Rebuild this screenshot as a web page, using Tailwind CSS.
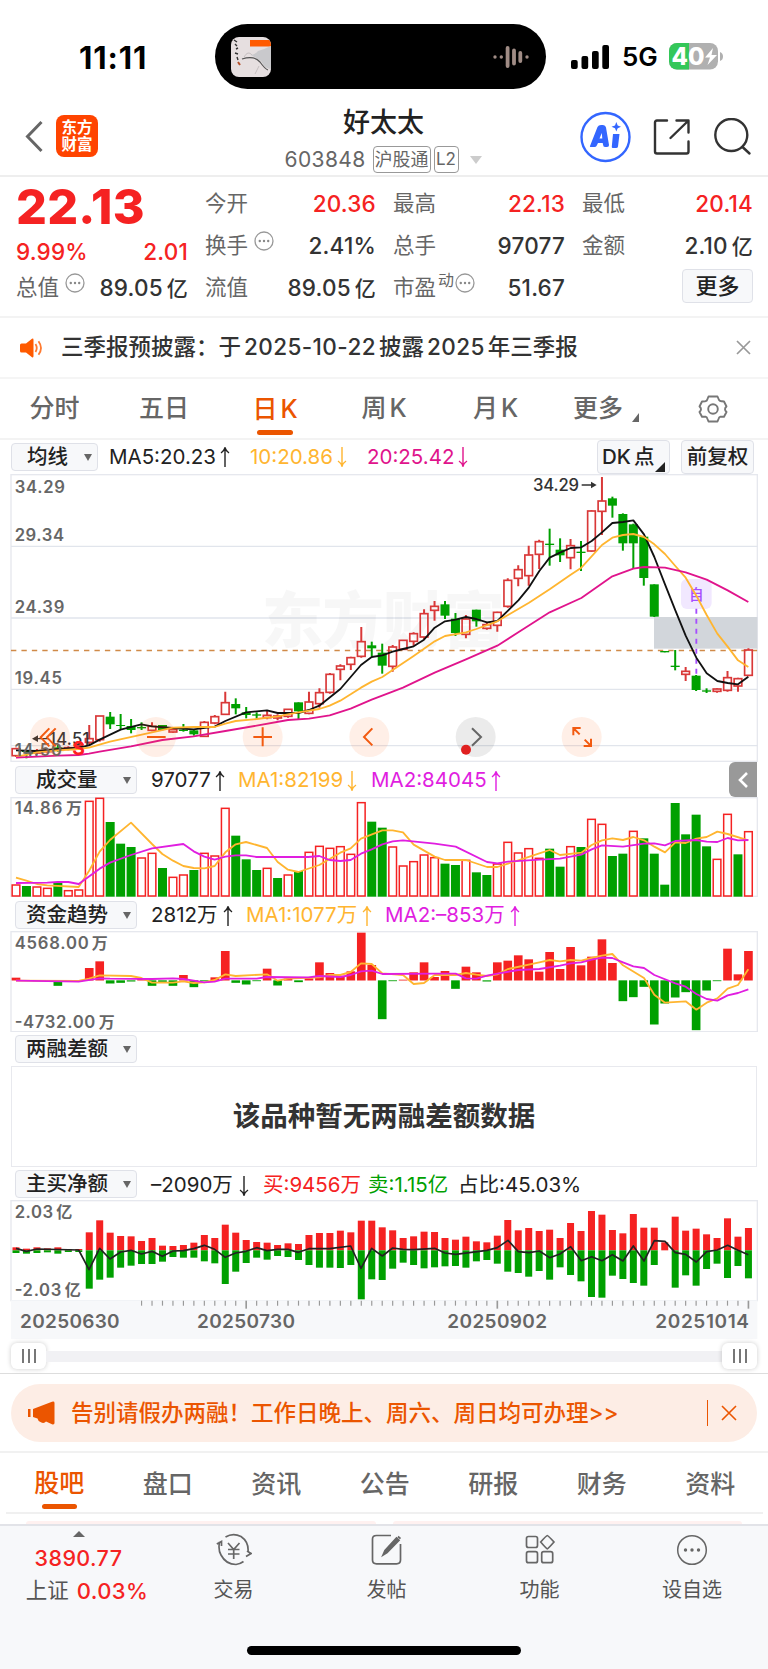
<!DOCTYPE html>
<html lang="zh-CN">
<head>
<meta charset="utf-8">
<title>好太太 603848</title>
<script src="https://cdn.jsdelivr.net/npm/@tailwindcss/browser@4"></script>
</head>
<body class="bg-white">
<div class="w-[768px] h-[1669px] overflow-hidden flex flex-col bg-white text-[#333] whitespace-nowrap font-['Inter','Noto_Sans_CJK_SC',sans-serif]">

  <!-- status bar -->
  <div class="h-[98px] shrink-0 flex items-start pt-6">
    <div class="w-[215px] h-[66px] flex items-center pl-[79px]"><span class="text-[31px] font-bold leading-none text-black tracking-[0.9px]">11:11</span></div>
    <div class="w-[331px] h-[65px] rounded-full bg-black flex items-center justify-between pl-4 pr-[17px]">
      <svg class="w-10 h-10" viewBox="0 0 40 40"><defs><clipPath id="th"><rect width="40" height="40" rx="8"/></clipPath></defs><g clip-path="url(#th)"><rect width="40" height="40" fill="#e6dfe0"/><rect x="19" y="3" width="21" height="6.5" fill="#ff5a00"/><path d="M20 18Q25 17 27 14Q34 12 40 9V32Q34 32 30 24Z" fill="#c9c9cc"/><path d="M11 22Q23 18 29 25Q34 32 37 33" fill="none" stroke="#555" stroke-width="1.2"/><path d="M13 20Q17 13 21 18M24 37L28 29" fill="none" stroke="#c5bfc0"/><path d="M3 3l3 2M4 7l2 2M5 12l2-1M4 16l3 1M6 20l1 3" stroke="#333" stroke-width="1.4"/><path d="M7 25l2 3" stroke="#b5502a" stroke-width="2"/></g></svg>
      <svg class="w-9 h-6" viewBox="0 0 36 24" stroke="#a08c85" stroke-linecap="round" stroke-width="3.4" fill="none"><path d="M2 12v.1M8.3 12v.1"/><path d="M14.6 3v18M21 5.500v13M27.300 8v8" stroke-width="3.800"/><path d="M34 12v.1"/></svg>
    </div>
    <div class="h-[65px] flex items-center pl-[25px]">
      <svg class="w-[38px] h-6" viewBox="0 0 38 24" fill="#000"><rect y="15" width="6.700" height="9" rx="2"/><rect x="10.500" y="11" width="6.700" height="13" rx="2"/><rect x="21" y="6" width="6.700" height="18" rx="2"/><rect x="31.300" width="6.700" height="24" rx="2"/></svg>
      <span class="ml-[13px] w-[34px] text-[26px] font-semibold leading-none text-black">5G</span>
      <svg class="ml-[13px] w-[55px] h-[27px]" viewBox="0 0 55 27"><defs><clipPath id="bt"><rect width="49" height="26.500" rx="8"/></clipPath></defs><g clip-path="url(#bt)"><rect width="49" height="27" fill="#b0b0b0"/><rect width="20" height="27" fill="#34c759"/></g><path d="M51 9q3 1 3 4.500t-3 4.500z" fill="#b0b0b0"/><text x="2.500" y="22" font-size="24" font-weight="800" fill="#fff" textLength="33" lengthAdjust="spacingAndGlyphs">40</text><path d="M44 5L36 14.500H41L38.500 22L48 12H42.500Z" fill="#fff"/></svg>
    </div>
  </div>

  <!-- title bar -->
  <div class="h-[79px] shrink-0 border-b-2 border-[#eee] flex">
    <div class="w-[250px] flex items-start pt-[17px] pl-[25px]">
      <svg class="w-[18px] h-[42px]" viewBox="0 0 18 42" fill="none" stroke="#666" stroke-width="3"><path d="M16.500 7L2.500 21.500L16.500 36"/></svg>
      <div class="ml-[13px] w-[42px] h-[42px] rounded-lg bg-[#ff4400] text-white font-bold text-[15.5px] leading-[17px] text-center pt-1 whitespace-normal">东方<br>财富</div>
    </div>
    <div class="w-[267px] flex flex-col items-center">
      <div class="h-[49px] flex items-center text-[27px] font-medium text-[#222] leading-none">好太太</div>
      <div class="flex items-center h-[27px] text-[#666] leading-none -ml-px -mt-px">
        <span class="text-[21px] w-[88px] tracking-[0.4px]">603848</span>
        <span class="w-[58px] h-[27px] rounded border border-[#999] text-[18px] flex items-center justify-center">沪股通</span>
        <span class="ml-[3px] w-[25px] h-[27px] rounded border border-[#999] text-[17px] flex items-center justify-center">L2</span>
        <svg class="ml-[11px] w-3 h-2" viewBox="0 0 12 8"><path d="M0 0H12L6 8Z" fill="#ccc"/></svg>
      </div>
    </div>
    <div class="flex items-start pt-3 pl-[63px]">
      <svg class="w-[51px] h-[54px]" viewBox="0 0 51 54" fill="#3366ff"><circle cx="25.500" cy="27" r="24" fill="none" stroke="#3366ff" stroke-width="2.400"/><path fill-rule="evenodd" d="M10 36L17.500 17Q18.500 15 21 15H23Q25.500 15 26 17.500L29 35Q29.200 37 27 37H25Q23.200 37 23 34.500L22.700 33H18L16.500 36Q16 37 14.500 37H11Q9.500 37.200 10 36ZM19.500 28.500H22.300L21.800 23Z"/><path d="M33 24H39.500L38 36.500Q37.800 38 36 38H33Q31.500 38 31.800 36.500Z"/><path d="M36.300 12.500L37.700 16L41 17.300L37.700 18.700L36.300 22L35 18.700L31.500 17.300L35 16Z" transform="translate(0 -.5)"/></svg>
      <svg class="ml-[22px] mt-[8px] w-[38px] h-[38px]" viewBox="0 0 38 38" fill="none" stroke="#333" stroke-width="2.400" stroke-linecap="round" stroke-linejoin="round"><path d="M14 2.500H4Q2 2.500 2 4.500V33.500Q2 35.500 4 35.500H33.500Q35.500 35.500 35.500 33.500V23.500M23.500 2.500H35.500V14.500M35 3L17.500 20"/></svg>
      <svg class="ml-[22px] mt-[8px] w-[40px] h-[40px]" viewBox="0 0 40 40" fill="none" stroke="#333" stroke-width="2.400" stroke-linecap="round"><circle cx="18.300" cy="17" r="16"/><path d="M29.500 29L36.500 35.500"/></svg>
    </div>
  </div>

  <!-- quote -->
  <div class="h-[141px] shrink-0 border-b-2 border-[#f3f3f3] flex text-[21.5px] leading-none text-[#666]">
    <div class="w-[188px] pl-[16px] flex flex-col pt-[2px]">
      <div class="h-[57px] flex items-center text-[48.5px] font-extrabold text-[#f52222] tracking-[0.2px]"><span>22.13</span></div>
      <div class="h-[32px] flex items-center justify-between text-[22.5px] font-medium text-[#f52222] tracking-[0.2px]"><span>9.99%</span><span>2.01</span></div>
      <div class="h-[40px] flex items-center justify-between"><span class="flex items-start">总值<svg class="ml-[6px] -mt-1 w-5 h-5" viewBox="0 0 20 20"><use href="#dots"/></svg></span><span class="text-[22.5px] font-medium text-[#333] tracking-[0.2px]">89.05<span class="ml-1 text-[21px]">亿</span></span></div>
    </div>
    <div class="ml-[17px] w-[171px] flex flex-col pt-[6px]">
      <div class="h-[42px] flex items-center justify-between"><span>今开</span><span class="text-[22.5px] font-medium text-[#f52222] tracking-[0.2px]">20.36</span></div>
      <div class="h-[42px] flex items-center justify-between"><span class="flex items-start">换手<svg class="ml-[6px] -mt-1 w-5 h-5" viewBox="0 0 20 20"><use href="#dots"/></svg></span><span class="text-[22.5px] font-medium text-[#333] tracking-[0.2px]">2.41%</span></div>
      <div class="h-[42px] flex items-center justify-between"><span>流值</span><span class="text-[22.5px] font-medium text-[#333] tracking-[0.2px]">89.05<span class="ml-1 text-[21px]">亿</span></span></div>
    </div>
    <div class="ml-[17px] w-[172px] flex flex-col pt-[6px]">
      <div class="h-[42px] flex items-center justify-between"><span>最高</span><span class="text-[22.5px] font-medium text-[#f52222] tracking-[0.2px]">22.13</span></div>
      <div class="h-[42px] flex items-center justify-between"><span>总手</span><span class="text-[22.5px] font-medium text-[#333] tracking-[0.2px]">97077</span></div>
      <div class="h-[42px] flex items-center justify-between"><span class="flex items-start">市盈<span class="ml-[2px] text-[16px] -mt-[5px]">动</span><svg class="ml-px -mt-1 w-5 h-5" viewBox="0 0 20 20"><use href="#dots"/></svg></span><span class="text-[22.5px] font-medium text-[#333] tracking-[0.2px]">51.67</span></div>
    </div>
    <div class="ml-[17px] w-[171px] flex flex-col pt-[6px]">
      <div class="h-[42px] flex items-center justify-between"><span>最低</span><span class="text-[22.5px] font-medium text-[#f52222] tracking-[0.2px]">20.14</span></div>
      <div class="h-[42px] flex items-center justify-between"><span>金额</span><span class="text-[22.5px] font-medium text-[#333] tracking-[0.2px]">2.10<span class="ml-1 text-[21px]">亿</span></span></div>
      <div class="mt-[2px] self-end w-[71px] h-[34px] rounded border border-[#dfe1e8] bg-[#f7f8fa] flex items-center justify-center text-[22px] font-medium text-[#222]">更多</div>
    </div>
  </div>
  <svg class="hidden"><g id="dots"><circle cx="10" cy="10" r="9" fill="none" stroke="#999" stroke-width="1.300"/><g fill="#888"><circle cx="5.800" cy="10" r="1.200"/><circle cx="10" cy="10" r="1.200"/><circle cx="14.200" cy="10" r="1.200"/></g></g></svg>

  <!-- announcement -->
  <div class="h-[61px] shrink-0 border-b-2 border-[#f5f5f5] flex items-center pl-5 pr-[17px]">
    <svg class="w-[23px] h-5" viewBox="0 0 23 20" fill="#ff5a00"><path d="M1.500 5.500H6L12 .8Q13.500 0 13.500 2V18Q13.500 20 12 19.200L6 14.500H1.500Q0 14.500 0 13V7Q0 5.500 1.500 5.500Z"/><path d="M15.500 6q2.500 4 0 8M18.500 3.200q5 6.800 0 13.600" fill="none" stroke="#ff7a30" stroke-width="1.800"/></svg>
    <span class="ml-[18px] text-[22.5px] font-medium leading-none text-[#333]">三季报预披露：于<span class="mx-[3px] tracking-[0.4px]">2025-10-22</span>披露<span class="mx-[3px] tracking-[0.4px]">2025</span>年三季报</span>
    <svg class="ml-auto w-[15px] h-[15px]" viewBox="0 0 15 15" stroke="#999" stroke-width="1.700"><path d="M1 1L14 14M14 1L1 14"/></svg>
  </div>

  <!-- period tabs -->
  <div class="h-[61px] shrink-0 border-b-2 border-[#f3f3f3] flex text-[25px] leading-none text-[#666] font-medium">
    <div class="w-[109px] flex items-center justify-center">分时</div>
    <div class="w-[110px] flex items-center justify-center">五日</div>
    <div class="w-[112px] flex flex-col items-center text-[#eb5500]"><div class="h-[51px] pt-[10px] flex items-center gap-[3px]"><span>日</span><span>K</span></div><div class="w-[36px] h-[5px] rounded-full bg-[#eb5500]"></div></div>
    <div class="w-[106px] flex items-center justify-center gap-[3px]"><span>周</span><span>K</span></div>
    <div class="w-[117px] flex items-center justify-center gap-[3px]"><span>月</span><span>K</span></div>
    <div class="ml-[19px] w-[67px] flex items-center">更多<svg class="ml-[9px] mt-[17px] w-[7px] h-[9px]" viewBox="0 0 7 9"><path d="M7 0V9H0Z" fill="#666"/></svg></div>
    <div class="ml-[58px] flex items-center"><svg class="w-[30px] h-[30px]" viewBox="0 0 30 30" fill="none" stroke="#777" stroke-width="1.900" stroke-linejoin="round"><path d="M10.500 2.500H19.500L21 6Q22 7.500 24 7.200L26 7.500L28.500 12.500Q25.500 15 28.500 18L26 22.800L22.500 22.600Q21 23 20.500 25L19.500 27.500H10.500L9.500 25Q9 23 7.500 22.600L4 22.800L1.500 18Q4.500 15 1.500 12.500L4 7.500L7 7.400Q9 7 9.300 5.500Z"/><circle cx="15" cy="15" r="4.800"/></svg></div>
  </div>

  <!-- moving averages row -->
  <div class="h-[34px] shrink-0 flex items-start pl-[11px] text-[20.5px] leading-none">
    <div class="mt-[3px] w-[87px] h-[28px] rounded border border-[#dfe1e8] bg-[#f7f8fa] flex items-center justify-between pl-[15px] pr-[5px] text-[20.5px] font-medium text-[#222]">均线<svg class="w-2 h-[7px]" viewBox="0 0 8 7"><path d="M0 0H8L4 7Z" fill="#666"/></svg></div>
    <div class="ml-[11px] h-[34px] w-[141px] flex items-center text-[#222]">MA5:20.23<svg class="ml-1 w-[10px] h-5"><use href="#up"/></svg></div>
    <div class="h-[34px] w-[117px] flex items-center text-[#ffb530]">10:20.86<svg class="ml-1 w-[10px] h-5"><use href="#down"/></svg></div>
    <div class="h-[34px] w-[230px] flex items-center text-[#e0148c]">20:25.42<svg class="ml-1 w-[10px] h-5"><use href="#down"/></svg></div>
    <div class="w-[73px] h-[34px] rounded border border-[#dfe1e8] bg-[#f7f8fa] flex items-center pl-1 text-[20.5px] font-medium text-[#222]">DK<span class="ml-[3px]">点</span><svg class="ml-px mt-5 w-[10px] h-[10px]" viewBox="0 0 10 10"><path d="M10 0V10H0Z" fill="#222"/></svg></div>
    <div class="ml-[11px] w-[73px] h-[34px] rounded border border-[#dfe1e8] bg-[#f7f8fa] flex items-center justify-center text-[20.5px] font-medium text-[#222]">前复权</div>
  </div>
  <svg class="hidden"><g id="up" fill="none" stroke="currentColor" stroke-width="1.400"><path d="M5 20V1M1 6Q4 4 5 .8Q6 4 9 6"/></g><g id="down" fill="none" stroke="currentColor" stroke-width="1.400"><path d="M5 0V19M1 14Q4 16 5 19.200Q6 16 9 14"/></g></svg>

  <!-- chart panels; svg units are thirds of a pixel -->
  <svg id="kline" class="w-[768px] h-[288px] shrink-0" viewBox="0 117 2304 864"></svg>

  <div class="h-[35px] shrink-0 flex items-start pl-[15px] text-[20.5px] leading-none">
    <div class="mt-1 w-[122px] h-[28px] rounded border border-[#dfe1e8] bg-[#f7f8fa] flex items-center pl-5 text-[20.5px] font-medium text-[#222]"><span class="w-[87px]">成交量</span><svg class="w-2 h-[7px]" viewBox="0 0 8 7"><path d="M0 0H8L4 7Z" fill="#666"/></svg></div>
    <div class="ml-[14px] h-[37px] w-[87px] flex items-center text-[#222]">97077<svg class="ml-1 w-[10px] h-5"><use href="#up"/></svg></div>
    <div class="h-[37px] w-[133px] flex items-center text-[#ffb530]">MA1:82199<svg class="ml-1 w-[10px] h-5"><use href="#down"/></svg></div>
    <div class="h-[37px] w-[358px] flex items-center text-[#e01ee0]">MA2:84045<svg class="ml-1 w-[10px] h-5"><use href="#up"/></svg></div>
    <div class="w-7 h-[35px] rounded-l-md bg-[#999] flex items-center justify-center"><svg class="w-[10px] h-4" viewBox="0 0 10 16" fill="none" stroke="#fff" stroke-width="2.600"><path d="M9 1L2 8L9 15"/></svg></div>
  </div>
  <svg id="volume" class="w-[768px] h-[100px] shrink-0" viewBox="0 111 2304 300"></svg>

  <div class="h-[34px] shrink-0 flex items-start pl-[15px] text-[20.5px] leading-none">
    <div class="mt-1 w-[122px] h-[28px] rounded border border-[#dfe1e8] bg-[#f7f8fa] flex items-center pl-[10px] text-[20.5px] font-medium text-[#222]"><span class="w-[97px]">资金趋势</span><svg class="w-2 h-[7px]" viewBox="0 0 8 7"><path d="M0 0H8L4 7Z" fill="#666"/></svg></div>
    <div class="ml-[14px] h-[37px] w-[95px] flex items-center text-[#222]">2812万<svg class="ml-[5px] w-[10px] h-5"><use href="#up"/></svg></div>
    <div class="h-[37px] w-[139px] flex items-center text-[#ffb530]">MA1:1077万<svg class="ml-[5px] w-[10px] h-5"><use href="#up"/></svg></div>
    <div class="h-[37px] flex items-center text-[#e01ee0]">MA2:–853万<svg class="ml-[5px] w-[10px] h-5"><use href="#up"/></svg></div>
  </div>
  <svg id="funds" class="w-[768px] h-[101px] shrink-0" viewBox="0 513 2304 303"></svg>

  <div class="h-[34px] shrink-0 flex items-start pl-[15px] leading-none">
    <div class="mt-[3px] w-[122px] h-[28px] rounded border border-[#dfe1e8] bg-[#f7f8fa] flex items-center pl-[10px] text-[20.5px] font-medium text-[#222]"><span class="w-[97px]">两融差额</span><svg class="w-2 h-[7px]" viewBox="0 0 8 7"><path d="M0 0H8L4 7Z" fill="#666"/></svg></div>
  </div>
  <div class="mx-[11px] h-[101px] shrink-0 border border-[#e8e9ee] flex items-center justify-center text-[27.5px] font-bold leading-none text-[#333]">该品种暂无两融差额数据</div>

  <div class="h-[33px] shrink-0 flex items-start pl-[15px] text-[20.5px] leading-none">
    <div class="mt-[3px] w-[122px] h-[28px] rounded border border-[#dfe1e8] bg-[#f7f8fa] flex items-center pl-[10px] text-[20.5px] font-medium text-[#222]"><span class="w-[97px]">主买净额</span><svg class="w-2 h-[7px]" viewBox="0 0 8 7"><path d="M0 0H8L4 7Z" fill="#666"/></svg></div>
    <div class="ml-[14px] h-[37px] w-[112px] flex items-center text-[#222]">–2090万<svg class="ml-[6px] w-[10px] h-5"><use href="#down"/></svg></div>
    <div class="h-[37px] w-[105px] flex items-center text-[#f52222]">买:9456万</div>
    <div class="h-[37px] w-[90px] flex items-center text-[#00a000]">卖:1.15亿</div>
    <div class="h-[37px] flex items-center text-[#222]">占比:45.03%</div>
  </div>
  <svg id="netbuy" class="w-[768px] h-[139px] shrink-0" viewBox="0 120 2304 417"></svg>

  <!-- range slider -->
  <div class="h-[35px] shrink-0 border-b border-[#ddd] px-[11px] flex items-center">
    <div class="w-[35px] h-[26px] rounded-md bg-white shadow-[0_0_5px_rgba(0,0,0,0.2)] flex items-center justify-center gap-1"><i class="w-[2px] h-[14px] bg-[#777]"></i><i class="w-[2px] h-[14px] bg-[#777]"></i><i class="w-[2px] h-[14px] bg-[#777]"></i></div>
    <div class="flex-1 h-[11px] bg-[#f1f1f4]"></div>
    <div class="w-[35px] h-[26px] rounded-md bg-white shadow-[0_0_5px_rgba(0,0,0,0.2)] flex items-center justify-center gap-1"><i class="w-[2px] h-[14px] bg-[#777]"></i><i class="w-[2px] h-[14px] bg-[#777]"></i><i class="w-[2px] h-[14px] bg-[#777]"></i></div>
  </div>

  <!-- promo banner -->
  <div class="h-[79px] shrink-0 border-b-2 border-[#f1f1f1] pt-[10px] px-[11px]">
    <div class="h-[58px] rounded-full bg-[#fdede5] flex items-center pl-[17px] pr-[20px] text-[#eb5500]">
      <svg class="w-[27px] h-6" viewBox="0 0 27 24" fill="#eb5500"><path d="M0 8H2.500V16H0ZM5 8L24 .7Q26.500 0 26.500 2V22Q26.500 24 24 23.300L18 20.500Q16 23 12.500 21Q10 20 9.500 17.500L5 16Z"/></svg>
      <span class="ml-[16px] text-[22.5px] font-medium leading-none">告别请假办两融！工作日晚上、周六、周日均可办理&gt;&gt;</span>
      <div class="ml-auto w-px h-[26px] bg-[#eb5500]"></div>
      <svg class="ml-[13px] w-4 h-4" viewBox="0 0 16 16" stroke="#eb5500" stroke-width="1.600"><path d="M1 1L15 15M15 1L1 15"/></svg>
    </div>
  </div>

  <!-- section tabs -->
  <div class="h-[71px] shrink-0 flex flex-col items-center">
    <div class="h-[59px] w-[768px] pl-[5px] flex text-[25px] leading-none text-[#666] font-medium">
      <div class="w-[108.5px] flex flex-col items-center text-[#eb5500]"><div class="h-[51px] flex items-center pt-[10px]">股吧</div><div class="w-[35px] h-[5px] rounded-full bg-[#eb5500]"></div></div>
      <div class="w-[108.5px] h-[62px] flex items-center justify-center">盘口</div>
      <div class="w-[108.5px] h-[62px] flex items-center justify-center">资讯</div>
      <div class="w-[108.5px] h-[62px] flex items-center justify-center">公告</div>
      <div class="w-[108.5px] h-[62px] flex items-center justify-center">研报</div>
      <div class="w-[108.5px] h-[62px] flex items-center justify-center">财务</div>
      <div class="w-[108.5px] h-[62px] flex items-center justify-center">资料</div>
    </div>
    <div class="w-[757px] h-[2px] bg-[#f0f0f0]"></div>
    <div class="mt-[7px] w-[716px] h-[3px] flex gap-[17px]"><div class="flex-1 bg-[#fff1f0] rounded-t-lg"></div><div class="flex-1 bg-[#fff1f0] rounded-t-lg"></div></div>
  </div>

  <!-- bottom bar -->
  <div class="flex-1 border-t-2 border-[#e2e3e8] bg-[#f7f8fa] flex flex-col">
    <div class="h-[120px] flex text-[20px] leading-none text-[#555] font-medium">
      <div class="w-[157px] flex flex-col items-center pt-[5px]">
        <svg class="w-3 h-[6px]" viewBox="0 0 12 6"><path d="M6 0L12 6H0Z" fill="#666"/></svg>
        <span class="mt-[11px] text-[21.5px] text-[#f52222] tracking-[0.4px]">3890.77</span>
        <div class="mt-[10px] ml-[17px] flex items-center text-[21.5px] font-normal">上证<span class="ml-[8px] text-[22px] font-medium text-[#f52222] tracking-[0.4px]">0.03%</span></div>
      </div>
      <div class="w-[153px] flex flex-col items-center pt-[7px]">
        <svg class="w-[36px] h-[34px]" viewBox="0 0 36 34" fill="none" stroke="#666" stroke-width="1.700"><path d="M9.500 4Q17 -.5 25 3.500Q33 9 32 19M3.500 9Q2 17 5 22Q10 31.500 20 31.500Q24 31 27.500 28.500M.8 11L5.500 8.500V13M30 23.500L35 20.500L31 18M12 10L17.700 16.500L23.500 10M17.700 16.500V26M12 16.500H23.500M12 21H23.500"/></svg>
        <span class="mt-[13px] font-normal">交易</span>
      </div>
      <div class="w-[153px] flex flex-col items-center pt-[7px]">
        <svg class="w-[36px] h-[34px]" viewBox="0 0 36 34" fill="none" stroke="#666" stroke-width="1.700"><path d="M22 2.500H7.500Q3.500 2.500 3.500 6V27Q3.500 30.800 7.500 30.800H27.500Q31.500 30.800 31.500 27V11"/><path d="M14 22L16 17.500L27.500 5L30 7.200L18 19.500ZM29 3.500L31.500 5.700" fill="#666"/></svg>
        <span class="mt-[13px] font-normal">发帖</span>
      </div>
      <div class="w-[153px] flex flex-col items-center pt-[7px]">
        <svg class="w-[36px] h-[34px]" viewBox="0 0 36 34" fill="none" stroke="#666" stroke-width="1.700"><rect x="4.500" y="3.500" width="11" height="11" rx="2"/><path d="M25.300 2.500Q26 2.500 32 9Q26 15.800 25.300 15.800Q24.500 15.800 18.700 9Q24.500 2.500 25.300 2.500Z"/><rect x="4.500" y="18.700" width="11" height="11" rx="2"/><rect x="19.700" y="18.700" width="11" height="11" rx="2"/></svg>
        <span class="mt-[13px] font-normal">功能</span>
      </div>
      <div class="w-[152px] flex flex-col items-center pt-[7px]">
        <svg class="w-[36px] h-[34px]" viewBox="0 0 36 34" fill="#666"><circle cx="18" cy="17" r="14.300" fill="none" stroke="#666" stroke-width="1.500"/><circle cx="11.500" cy="17" r="1.700"/><circle cx="18" cy="17" r="1.700"/><circle cx="24.500" cy="17" r="1.700"/></svg>
        <span class="mt-[13px] font-normal">设自选</span>
      </div>
    </div>
    <div class="mx-auto w-[274px] h-[9px] rounded-full bg-black"></div>
  </div>
</div>

<script>
const RED = '#f52222', GREEN = '#00a000', CANDLE = '#d93838';
const X = i => 48 + 31.39 * i;
const line = (pts, c, w = 5.5) => `<polyline points="${pts}" fill="none" stroke="${c}" stroke-width="${w}" stroke-linejoin="round"/>`;
const label = (t, x, y, w, c = '#666', s = 50) => `<text x="${x}" y="${y}" font-size="${s}" font-weight="${c === '#666' ? 600 : 500}" fill="${c}" textLength="${w}">${t}</text>`;
const frame = (y, h) => `<rect x="33" y="${y}" width="2239" height="${h}" fill="none" stroke="#e6e8ee" stroke-width="4"/>`;

// type, high, body top, body bottom, low
const candles = `r938,941,962,966 g945,948,951,970 r942,948,954,958 r942,946,950,953 g930,937,941,950 r934,938,943,946 r925,930,935,942 r870,911,922,930 r843,843,914,920 g831,845,868,882 g837,870,873,882 g852,873,885,895 g862,876,880,885 r862,874,886,889 g870,870,885,886 r880,884,891,893 g867,884,888,890 g884,886,898,902 r858,862,904,904 r840,845,864,868 r770,803,838,840 g790,807,820,838 g816,832,840,850 g832,838,842,851 r825,841,848,853 r838,843,849,856 r822,823,844,848 g802,802,829,852 r770,801,835,838 r760,773,806,818 r714,718,772,776 r688,693,703,736 r665,668,688,705 r576,620,664,668 g620,631,640,664 g626,653,692,716 r630,636,694,710 r616,616,643,643 r592,596,619,632 r523,536,606,612 r498,514,526,557 g498,508,542,552 g534,551,594,603 r540,552,598,610 g524,524,559,575 r562,569,580,584 r530,532,571,590 r430,436,514,518 r391,404,430,454 r332,360,422,452 r314,320,358,402 g281,326,330,392 g310,344,361,381 r312,332,368,403 g318,350,354,408 r226,228,348,350 r126,198,229,300 g185,190,212,248 g235,237,325,347 g266,268,325,402 g305,305,429,452 g448,448,545,546 g648,648,652,652 g645,692,696,706 r696,709,718,738 g720,722,765,768 g760,766,770,774 r760,762,769,773 r708,728,766,770 r728,731,753,770 r640,645,721,724`.split(' ');
let s = frame(119, 860);
for (const y of [334, 549, 763, 932]) s += `<path d="M33 ${y}H2272" stroke="#e1e5ec" stroke-width="4"/>`;
s += `<text x="785" y="624" font-size="185" font-weight="900" fill="#000" fill-opacity=".03" textLength="730">东方财富</text>`;
s += `<rect x="1962" y="546" width="310" height="95" fill="#d2d6db"/>`;
s += `<path d="M33 646.500H2272" stroke="#d08a48" stroke-width="5" stroke-dasharray="16 15.300"/>`;
candles.forEach((c, i) => {
  const [h, t, b, l] = c.slice(1).split(',').map(Number), x = X(i);
  s += c[0] === 'r'
    ? `<path d="M${x} ${h}V${t}M${x} ${b}V${l}" stroke="${CANDLE}" stroke-width="6"/><rect x="${x - 11.5}" y="${t}" width="23" height="${b - t}" fill="none" stroke="${CANDLE}" stroke-width="5"/>`
    : `<path d="M${x} ${h}V${l}" stroke="${GREEN}" stroke-width="6"/><rect x="${x - 13.5}" y="${t}" width="27" height="${b - t}" fill="${GREEN}"/>`;
});
s += `<rect x="2043" y="432" width="92" height="90" rx="18" fill="#f1e8ff"/><text x="2089" y="496" font-size="44" font-weight="500" text-anchor="middle" fill="#a64dff">自</text><path d="M2089 521V724" stroke="#a64dff" stroke-width="5.500" stroke-dasharray="15 15"/>`;
s += line('48,946 111,948 173,942 236,938 267,931 299,914 362,884 424,868 456,874 519,879 581,883 644,875 676,858 738,832 801,826 833,834 895,834 927,825 958,812 1021,762 1083,690 1115,666 1147,661 1178,650 1209,642 1241,634 1272,614 1304,578 1335,559 1367,554 1398,546 1429,552 1461,562 1492,558 1524,527 1555,496 1587,457 1618,408 1649,368 1680,353 1712,339 1744,337 1775,318 1806,292 1837,264 1869,261 1900,256 1932,298 1963,366 1995,448 2026,526 2057,602 2089,668 2120,715 2152,738 2183,744 2214,748 2245,725', '#111');
s += line('48,966 111,952 173,946 236,942 267,938 330,920 456,892 519,878 581,876 644,876 676,866 707,858 770,852 833,844 895,832 958,822 989,812 1021,797 1052,778 1083,758 1115,740 1147,726 1178,705 1241,663 1304,619 1335,603 1398,592 1429,582 1492,559 1524,540 1587,503 1649,463 1712,419 1744,398 1806,330 1837,308 1869,300 1900,297 1932,306 1963,328 1995,357 2026,393 2057,428 2089,482 2120,540 2152,596 2183,635 2214,676 2245,696', '#ffb530');
s += line('48,968 111,965 173,962 236,960 267,956 299,950 393,934 487,915 581,904 676,888 770,872 864,855 927,851 989,841 1052,821 1115,794 1178,770 1209,758 1304,713 1398,673 1492,632 1555,592 1649,532 1744,489 1837,424 1900,401 1932,396 1995,398 2057,412 2120,434 2183,466 2245,501', '#e0148c');
s += label('34.29', 44, 174, 151) + label('29.34', 44, 317, 148) + label('24.39', 44, 533, 149) + label('19.45', 44, 747, 142) + label('14.50', 44, 963, 142);
s += label('34.29', 1599, 168, 138, '#333') + label('14.51', 147, 930, 121, '#333');
s += `<path d="M1745 150H1775M110 911H145" stroke="#333" stroke-width="4"/><path d="M1773 140L1790 150L1773 160ZM114 901L96 911L114 921Z" fill="#333"/>`;
s += `<text x="217" y="960" font-size="58" font-weight="700" fill="#ff2020">S</text>`;
for (const x of [150, 468, 788, 1108, 1745]) s += `<circle cx="${x}" cy="906" r="60" fill="#ff6a20" fill-opacity=".11"/>`;
s += `<circle cx="1427" cy="906" r="60" fill="#000" fill-opacity=".08"/><circle cx="1398" cy="944" r="15" fill="#e02020"/>`;
s += `<g fill="none" stroke="#f25a10" stroke-width="6"><path d="M148 880L122 907L148 934M167 880L141 907L167 934M441 906H497M760 906H816M788 877V934M1117 880L1092 906L1117 931M1720 901V879H1742M1720 879L1739 898M1773 911V933H1751M1773 933L1754 914"/><path d="M1416 880L1443 906L1416 932" stroke="#666"/></g>`;
kline.innerHTML = s;

const volume_ = 'r375 g379 r381 r385 g370 r392 r390 r124 r115 g187 g252 g262 r294 r280 g325 r352 r345 g331 r280 r288 r145 g228 g299 g331 r325 g355 r345 g334 r277 r259 r265 r260 r283 r128 g186 g204 r261 r318 r305 r285 r293 g312 g316 r301 g338 g346 r312 r247 r279 r266 r295 g267 g321 r260 g262 r178 r193 g289 g282 r214 g236 g282 g375 g130 g224 g165 g260 r298 r163 g284 r215'.split(' ');
s = frame(113, 296);
volume_.forEach((v, i) => {
  const y = +v.slice(1), x = X(i);
  s += v[0] === 'r' ? `<rect x="${x - 11.5}" y="${y}" width="23" height="${408 - y}" fill="#fff" stroke="${RED}" stroke-width="4.500"/>`
    : `<rect x="${x - 13.5}" y="${y - 1}" width="27" height="${411 - y}" fill="${GREEN}"/>`;
});
s += line('48,353 79,362 111,372 142,376 236,381 267,333 299,275 330,240 393,188 456,252 487,282 519,302 550,318 581,324 613,325 644,318 676,277 707,253 738,246 801,264 833,306 864,329 895,336 958,315 1021,278 1052,265 1083,236 1147,211 1178,211 1209,217 1241,254 1304,290 1335,300 1398,300 1461,321 1492,321 1555,301 1618,280 1649,270 1680,285 1744,278 1775,255 1806,241 1837,235 1869,240 1900,231 1932,241 1963,260 1995,277 2026,247 2057,249 2089,236 2120,231 2152,215 2183,222 2245,241', '#ffb530');
s += line('48,369 142,368 173,366 205,366 236,372 299,326 330,308 393,285 456,265 550,252 581,274 613,290 644,299 676,290 707,286 738,286 770,291 925,291 958,288 989,300 1021,303 1052,300 1083,281 1115,268 1147,253 1178,244 1209,241 1304,251 1367,260 1461,306 1492,310 1524,305 1618,299 1680,296 1744,284 1775,268 1806,256 1869,260 1932,251 1963,250 1995,256 2026,243 2089,240 2120,245 2152,246 2183,234 2214,241 2245,240', '#e01ee0');
volume.innerHTML = s + label('14.86', 44, 162, 143) + label('万', 198, 162, 48, '#666', 48);

const flow = [653,662,664,663,678,661,661,624,604,671,669,665,656,678,666,678,645,682,664,652,573,669,674,664,626,677,656,667,655,607,639,650,634,518,615,778,664,659,637,607,651,633,687,620,637,665,607,602,586,598,635,576,627,561,616,590,538,609,724,712,681,794,731,713,697,811,692,664,566,643,573];
s = frame(515, 300);
flow.forEach((y, i) => { s += `<rect x="${X(i) - 13}" y="${Math.min(y, 661)}" width="26" height="${Math.abs(y - 661.5)}" fill="${y < 662 ? RED : GREEN}"/>`; });
s += line('48,662 236,663 267,656 299,646 393,648 424,654 456,668 519,668 550,664 581,669 613,667 644,660 676,643 707,648 801,643 833,662 864,656 958,652 989,645 1021,645 1052,636 1083,610 1115,612 1147,640 1209,645 1241,672 1272,669 1304,645 1367,645 1398,639 1429,644 1461,648 1492,643 1524,627 1618,607 1649,600 1680,604 1712,600 1744,602 1775,594 1806,587 1837,582 1869,616 1932,654 1963,704 1995,728 2057,724 2089,749 2120,728 2152,715 2183,686 2214,675 2245,628', '#ffb530');
s += line('48,662 236,665 299,655 330,656 456,657 519,655 550,657 613,667 644,665 676,656 770,656 801,651 925,652 958,648 1021,651 1052,645 1083,634 1115,632 1147,642 1304,641 1367,641 1398,655 1429,656 1461,647 1492,641 1555,630 1618,627 1680,617 1712,610 1744,607 1775,599 1806,593 1837,594 1869,607 1900,619 1932,624 1963,645 2026,670 2057,680 2089,702 2120,717 2152,722 2183,706 2214,699 2245,688', '#e01ee0');
funds.innerHTML = s + label('4568.00', 44, 567, 222) + label('万', 275, 567, 48, '#666', 48) + label('-4732.00', 44, 803, 242) + label('万', 296, 803, 48, '#666', 48);

const net = '262,279 266,281 262,279 265,277 262,281 268,276 267,276 217,386 181,359 218,353 228,323 229,317 243,312 234,312 257,305 258,291 255,293 248,293 225,304 234,310 194,372 218,335 240,309 246,293 248,299 255,288 250,291 252,300 225,315 219,323 219,323 212,324 217,315 182,418 182,358 202,360 211,326 234,308 229,315 215,325 216,322 234,319 239,318 230,323 244,304 247,300 227,311 180,335 211,339 204,350 213,333 209,359 234,322 189,345 213,364 153,411 164,413 210,347 220,357 162,369 203,377 203,315 247,271 170,383 212,346 206,377 223,327 234,311 175,354 230,318 204,355'.split(' ');
s = frame(122, 300) + `<rect x="33" y="421" width="2239" height="116" fill="#f7f8fa"/>`;
net.forEach((p, i) => {
  const [t, b] = p.split(',').map(Number), x = X(i);
  s += `<rect x="${x - 10.5}" y="${t}" width="21" height="${271 - t}" fill="${RED}"/><rect x="${x - 10.5}" y="271" width="21" height="${b - 271}" fill="${GREEN}"/>`;
  if (i > 11) { const m = [22, 46, 70].includes(i); s += `<path d="M${x} 422V${m ? 446 : 437}" stroke="#999" stroke-width="${m ? 5 : 3.5}"/>`; }
});
s += line('48,265 79,274 111,267 236,270 267,329 299,265 330,297 362,276 393,271 424,282 456,274 487,289 519,273 550,272 581,266 613,256 644,268 676,292 707,279 738,274 770,263 801,272 833,268 864,268 895,277 927,266 989,266 1052,258 1083,325 1115,265 1147,288 1178,264 1209,268 1241,269 1304,265 1335,279 1367,283 1461,271 1492,263 1524,241 1555,275 1587,278 1618,273 1649,293 1680,282 1712,260 1744,302 1775,290 1806,302 1837,284 1869,303 1900,258 1932,303 1963,242 1995,244 2026,278 2057,283 2089,306 2120,275 2152,270 2183,256 2214,271 2245,284', '#222', 5);
s += label('2.03', 44, 173, 115) + label('亿', 169, 173, 48, '#666', 48) + label('-2.03', 44, 408, 140) + label('亿', 194, 408, 48, '#666', 48);
s += label('20250630', 60, 503, 299, '#666', 57) + label('20250730', 591, 503, 294, '#666', 57) + label('20250902', 1342, 503, 299, '#666', 57) + label('20251014', 1966, 503, 281, '#666', 57);
netbuy.innerHTML = s;
</script>
</body>
</html>
